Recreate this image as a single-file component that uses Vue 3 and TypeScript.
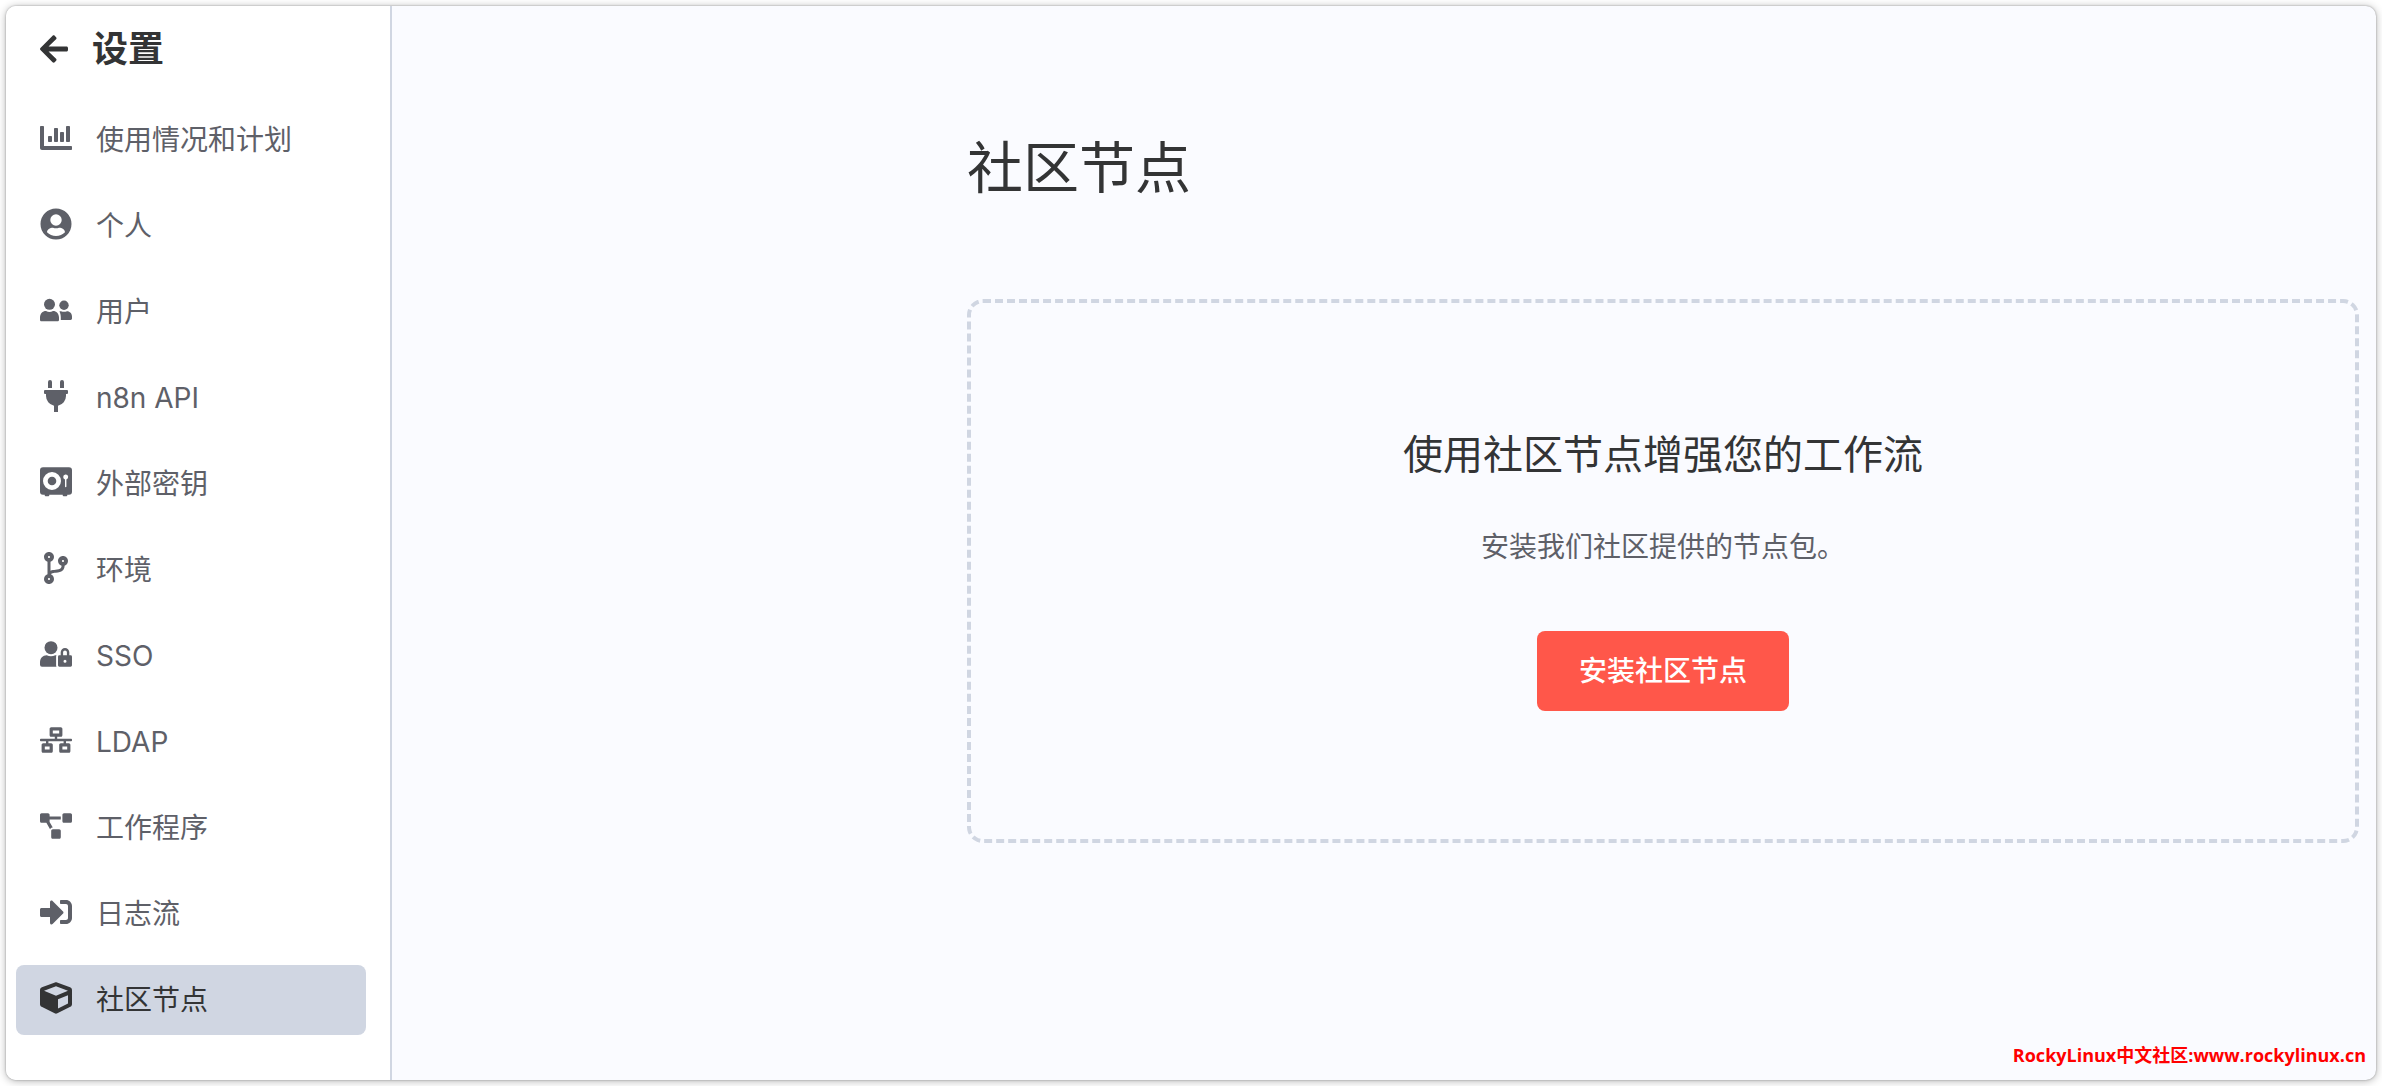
<script setup lang="ts">
import { ref } from 'vue'

interface NavItem {
  id: string
  label: string
  viewBox: string
  paths: string[]
}

const items: NavItem[] = [
  {
    id: 'usage',
    label: '使用情况和计划',
    viewBox: '0 0 512 512',
    paths: [
      'M332.8 320h38.4c6.4 0 12.8-6.4 12.8-12.8V172.8c0-6.4-6.4-12.8-12.8-12.8h-38.4c-6.4 0-12.8 6.4-12.8 12.8v134.4c0 6.4 6.4 12.8 12.8 12.8zm96 0h38.4c6.4 0 12.8-6.4 12.8-12.8V76.8c0-6.4-6.4-12.8-12.8-12.8h-38.4c-6.4 0-12.8 6.4-12.8 12.8v230.4c0 6.4 6.4 12.8 12.8 12.8zm-288 0h38.4c6.4 0 12.8-6.4 12.8-12.8v-70.4c0-6.4-6.4-12.8-12.8-12.8h-38.4c-6.4 0-12.8 6.4-12.8 12.8v70.4c0 6.4 6.4 12.8 12.8 12.8zm96 0h38.4c6.4 0 12.8-6.4 12.8-12.8V108.8c0-6.4-6.4-12.8-12.8-12.8h-38.4c-6.4 0-12.8 6.4-12.8 12.8v198.4c0 6.4 6.4 12.8 12.8 12.8zM496 384H64V80c0-8.84-7.16-16-16-16H16C7.16 64 0 71.16 0 80v336c0 17.67 14.33 32 32 32h464c8.84 0 16-7.16 16-16v-32c0-8.84-7.16-16-16-16z',
    ],
  },
  {
    id: 'personal',
    label: '个人',
    viewBox: '0 0 32 32',
    paths: [
      'M0.500 16a15.500 15.500 0 1 0 31 0a15.500 15.500 0 1 0-31 0zM10.300 12a5.700 5.700 0 1 0 11.400 0a5.700 5.700 0 1 0-11.400 0zM7 24.300c0-2.600 2.800-4.600 6-4.600 1 .4 2 .6 3 .6s2-.2 3-.6c3.200 0 6 2 6 4.600-2.300 2.300-5.500 3.700-9 3.700s-6.700-1.400-9-3.700z',
    ],
  },
  {
    id: 'users',
    label: '用户',
    viewBox: '0 0 32 32',
    paths: [
      'M4 10.300a5.500 5.500 0 1 0 11 0a5.500 5.500 0 1 0-11 0z',
      'M19.300 11.300a4.700 4.700 0 1 0 9.400 0a4.700 4.700 0 1 0-9.400 0z',
      'M0 23.500C0 19.700 2.600 17 6 17c1.200.6 2.300.9 3.500.9s2.300-.3 3.500-.9c3.400 0 6 2.700 6 6.500v2.200c0 .9-.7 1.600-1.600 1.600H1.600C.7 27.300 0 26.600 0 25.700z',
      'M19.400 17.400c.5-.1 1-.2 1.600-.2 1 .4 2 .6 3 .6s2-.2 3-.6c2.900 0 5 2.300 5 5.300v2c0 .8-.6 1.400-1.400 1.400h-9.800v-2.400c0-2.400-.4-4.400-1.400-6.100z',
    ],
  },
  {
    id: 'api',
    label: 'n8n API',
    viewBox: '-64 0 512 512',
    paths: [
      'M320 32a32 32 0 0 0-64 0v96h64zm48 128H16A16 16 0 0 0 0 176v32a16 16 0 0 0 16 16h16v32a160.07 160.07 0 0 0 128 156.8V512h64v-99.200A160.07 160.07 0 0 0 352 256v-32h16a16 16 0 0 0 16-16v-32a16 16 0 0 0-16-16zM128 32a32 32 0 0 0-64 0v96h64z',
    ],
  },
  {
    id: 'secrets',
    label: '外部密钥',
    viewBox: '0 0 32 32',
    paths: [
      'M3 1.300h26a3 3 0 0 1 3 3v21.400a3 3 0 0 1-3 3h-1.700v.6a1 1 0 0 1-1 1h-2.600a1 1 0 0 1-1-1v-.6H9.300v.6a1 1 0 0 1-1 1H5.700a1 1 0 0 1-1-1v-.6H3a3 3 0 0 1-3-3V4.300a3 3 0 0 1 3-3zM3 15a9 9 0 1 0 18 0a9 9 0 1 0-18 0zM23.200 11a2.500 2.500 0 0 0 1.800 2.400V20.600a.7.7 0 0 0 1.400 0V13.400A2.500 2.500 0 1 0 23.200 11z',
      'M7.700 15a4.300 4.300 0 1 0 8.600 0a4.300 4.300 0 1 0-8.600 0z',
    ],
  },
  {
    id: 'environments',
    label: '环境',
    viewBox: '-64 0 512 512',
    paths: [
      'M384 144c0-44.200-35.800-80-80-80s-80 35.800-80 80c0 36.400 24.300 67.100 57.500 76.800-.6 16.100-4.200 28.500-11 36.900-15.400 19.200-49.300 22.400-85.200 25.700-28.200 2.600-57.400 5.400-81.300 16.900v-144c32.500-10.200 56-40.500 56-76.300 0-44.200-35.800-80-80-80S0 35.800 0 80c0 35.800 23.500 66.100 56 76.300v199.300C23.500 365.900 0 396.200 0 432c0 44.200 35.800 80 80 80s80-35.800 80-80c0-34-21.200-63.100-51.200-74.600 3.100-5.200 7.800-9.800 14.900-13.400 16.200-8.200 40.400-10.400 66.100-12.800 42.200-3.900 90-8.400 118.200-43.400 14-17.400 21.100-39.800 21.600-67.900 31.600-10.800 54.400-40.700 54.400-75.900zM80 64c8.800 0 16 7.200 16 16s-7.200 16-16 16-16-7.200-16-16 7.200-16 16-16zm0 384c-8.800 0-16-7.200-16-16s7.200-16 16-16 16 7.200 16 16-7.200 16-16 16zm224-320c8.800 0 16 7.200 16 16s-7.200 16-16 16-16-7.200-16-16 7.200-16 16-16z',
    ],
  },
  {
    id: 'sso',
    label: 'SSO',
    viewBox: '0 0 32 32',
    paths: [
      'M4.500 9.700a6.500 6.500 0 1 0 13 0a6.500 6.500 0 1 0-13 0z',
      'M0 24.500c0-4.200 2.800-7.200 6.700-7.200 1.400.6 2.800 1 4.300 1s2.900-.4 4.300-1h1.200a3 3 0 0 0-.4 1.500v8.400c0 .5.100 1 .4 1.500H2a2 2 0 0 1-2-2z',
      'M30.600 17.300h-1.300V14.300a4.300 4.300 0 0 0-8.600 0v3h-1.300a1.400 1.400 0 0 0-1.400 1.400v8.600a1.400 1.400 0 0 0 1.400 1.400h11.200a1.400 1.400 0 0 0 1.400-1.400v-8.600a1.400 1.400 0 0 0-1.400-1.400zM25 24.700a1.500 1.500 0 1 1 0-3a1.500 1.500 0 0 1 0 3zM26.900 17.300h-3.800V14.300a1.900 1.900 0 0 1 3.800 0z',
    ],
  },
  {
    id: 'ldap',
    label: 'LDAP',
    viewBox: '0 -64 640 640',
    paths: [
      'M640 264v-16c0-8.840-7.160-16-16-16H344v-40h72c17.670 0 32-14.330 32-32V32c0-17.670-14.330-32-32-32H224c-17.670 0-32 14.330-32 32v128c0 17.670 14.330 32 32 32h72v40H16c-8.840 0-16 7.160-16 16v16c0 8.840 7.160 16 16 16h104v40H64c-17.670 0-32 14.330-32 32v128c0 17.670 14.330 32 32 32h160c17.670 0 32-14.330 32-32V352c0-17.670-14.330-32-32-32h-56v-40h304v40h-56c-17.670 0-32 14.330-32 32v128c0 17.670 14.330 32 32 32h160c17.670 0 32-14.330 32-32V352c0-17.670-14.330-32-32-32h-56v-40h104c8.840 0 16-7.160 16-16zM256 128V64h128v64H256zm-64 320H96v-64h96v64zm352 0h-96v-64h96v64z',
    ],
  },
  {
    id: 'workers',
    label: '工作程序',
    viewBox: '0 -64 640 640',
    paths: [
      'M384 320H256c-17.67 0-32 14.33-32 32v128c0 17.67 14.33 32 32 32h128c17.67 0 32-14.33 32-32V352c0-17.67-14.33-32-32-32zM192 32c0-17.67-14.33-32-32-32H32C14.33 0 0 14.33 0 32v128c0 17.67 14.33 32 32 32h95.72l73.16 128.04C211.98 300.98 232.4 288 256 288h.28L192 175.51V128h224V64H192V32zM608 0H480c-17.67 0-32 14.33-32 32v128c0 17.67 14.33 32 32 32h128c17.67 0 32-14.33 32-32V32c0-17.67-14.33-32-32-32z',
    ],
  },
  {
    id: 'log-streaming',
    label: '日志流',
    viewBox: '0 0 512 512',
    paths: [
      'M416 448h-84c-6.600 0-12-5.400-12-12v-40c0-6.600 5.400-12 12-12h84c17.700 0 32-14.300 32-32V160c0-17.700-14.300-32-32-32h-84c-6.600 0-12-5.400-12-12V76c0-6.600 5.400-12 12-12h84c53 0 96 43 96 96v192c0 53-43 96-96 96zm-47-201L201 79c-15-15-41-4.500-41 17v96H24c-13.300 0-24 10.700-24 24v96c0 13.300 10.700 24 24 24h136v96c0 21.500 26 32 41 17l168-168c9.300-9.400 9.300-24.600 0-34z',
    ],
  },
  {
    id: 'community-nodes',
    label: '社区节点',
    viewBox: '0 0 512 512',
    paths: [
      'M239.100 6.300l-208 78c-18.700 7-31.100 25-31.100 45v225.100c0 18.200 10.300 34.800 26.500 42.900l208 104c13.500 6.800 29.400 6.800 42.900 0l208-104c16.300-8.100 26.500-24.800 26.500-42.900V129.300c0-20-12.400-37.900-31.100-44.900l-208-78C262 2.200 250 2.200 239.100 6.300zM256 68.400l192 72v1.100l-192 78-192-78v-1.100l192-72zm32 356V275.500l160-65v133.900l-160 80z',
    ],
  },
]

const active = ref('community-nodes')
</script>

<template>
  <div class="window">
    <aside class="sidebar">
      <a class="back" href="#" @click.prevent>
        <svg class="back-icon" viewBox="0 0 448 512" aria-hidden="true">
          <path d="M257.500 445.100l-22.200 22.200c-9.400 9.400-24.600 9.400-33.900 0L7 273c-9.400-9.400-9.400-24.600 0-33.900L201.400 44.700c9.400-9.400 24.600-9.400 33.900 0l22.200 22.200c9.500 9.500 9.300 25-.4 34.300L136.600 216H424c13.300 0 24 10.700 24 24v32c0 13.300-10.700 24-24 24H136.600l120.500 114.800c9.800 9.300 10 24.800.4 34.300z" />
        </svg>
        <span>设置</span>
      </a>
      <nav class="menu">
        <a
          v-for="item in items"
          :key="item.id"
          class="menu-item"
          :class="{ active: item.id === active }"
          :href="'#' + item.id"
          @click.prevent="active = item.id"
        >
          <svg class="menu-icon" :viewBox="item.viewBox" aria-hidden="true">
            <path v-for="(d, i) in item.paths" :key="i" :d="d" fill-rule="evenodd" />
          </svg>
          <span>{{ item.label }}</span>
        </a>
      </nav>
    </aside>

    <main class="content">
      <h1 class="page-title">社区节点</h1>
      <section class="action-box">
        <h2 class="action-title">使用社区节点增强您的工作流</h2>
        <p class="action-text">安装我们社区提供的节点包。</p>
        <button class="action-button" type="button">安装社区节点</button>
      </section>
    </main>

    <p class="watermark">RockyLinux中文社区:www.rockylinux.cn</p>
  </div>
</template>

<style>
body {
  background: #fff;
}
</style>

<style scoped>
.window {
  position: relative;
  box-sizing: border-box;
  display: flex;
  min-height: calc(100vh - 12px);
  margin: 6px;
  overflow: hidden;
  border-radius: 10px;
  background: #fafbff;
  box-shadow: 0 0 2px rgba(0, 0, 0, 0.35), 0 1px 8px rgba(0, 0, 0, 0.3);
  color: #333435;
  font-family: Inter, 'Noto Sans CJK SC', sans-serif;
}

.sidebar {
  box-sizing: border-box;
  flex: 0 0 386px;
  padding: 19px 24px 24px 10px;
  border-right: 2px solid #d0d6e2;
  background: #fff;
}

.back {
  display: flex;
  align-items: center;
  gap: 24px;
  height: 48px;
  padding-left: 24px;
  color: inherit;
  font-size: 36px;
  font-weight: 700;
  line-height: 48px;
  text-decoration: none;
}

.back-icon {
  width: 28px;
  height: 32px;
  fill: currentColor;
}

.menu {
  display: flex;
  flex-direction: column;
  gap: 16px;
  margin-top: 32px;
}

.menu-item {
  display: flex;
  align-items: center;
  gap: 24px;
  height: 70px;
  padding: 0 24px;
  border-radius: 8px;
  color: #5e6068;
  font-size: 28px;
  line-height: 40px;
  text-decoration: none;
}

.menu-item.active {
  background: #d0d6e2;
  color: #333435;
}

.menu-icon {
  width: 32px;
  height: 32px;
  padding-bottom: 4px;
  fill: currentColor;
}

.content {
  flex: 1;
  min-width: 0;
  padding: 122px 17px 48px 575px;
}

.page-title {
  margin: 0;
  font-size: 56px;
  font-weight: 400;
  line-height: 80px;
}

.action-box {
  display: flex;
  flex-direction: column;
  align-items: center;
  margin-top: 91px;
  padding: 128px 24px;
  border: 4px dashed #d0d6e2;
  border-radius: 16px;
}

.action-title {
  margin: 0;
  font-size: 40px;
  font-weight: 400;
  line-height: 48px;
}

.action-text {
  margin: 48px 0 64px;
  color: #5e6068;
  font-size: 28px;
  line-height: 40px;
}

.action-button {
  height: 80px;
  padding: 0 42px;
  border: 0;
  border-radius: 8px;
  background: #ff574a;
  color: #fff;
  font-family: inherit;
  font-size: 28px;
  font-weight: 500;
  line-height: 40px;
  cursor: pointer;
}

.watermark {
  position: absolute;
  right: 10px;
  bottom: 13px;
  margin: 0;
  color: #f00;
  font-family: 'Open Sans', 'Noto Sans CJK SC', sans-serif;
  font-size: 18px;
  font-weight: 700;
  line-height: 24px;
}
</style>
